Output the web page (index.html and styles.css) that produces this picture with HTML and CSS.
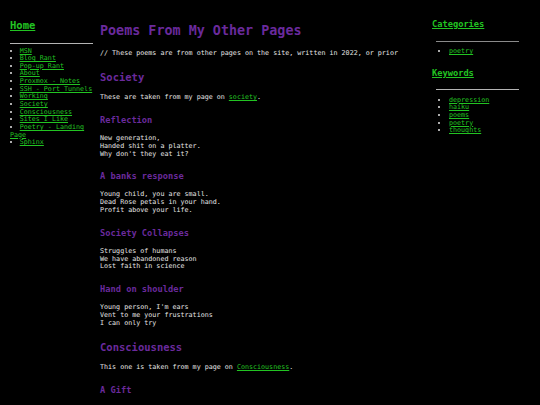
FILE: index.html
```html
<!DOCTYPE html>
<html lang="en">
<head>
<meta charset="utf-8">
<title>Poems From My Other Pages</title>
<link rel="stylesheet" href="styles.css">
</head>
<body>
<div class="layout">
  <nav class="side-left">
    <h2 class="side-title"><a href="#">Home</a></h2>
    <hr class="rule">
    <ul class="nav-list">
      <li><a href="#">MSN</a></li>
      <li><a href="#">Blog Rant</a></li>
      <li><a href="#">Pop-up Rant</a></li>
      <li><a href="#">About</a></li>
      <li><a href="#">Proxmox - Notes</a></li>
      <li><a href="#">SSH - Port Tunnels</a></li>
      <li><a href="#">Working</a></li>
      <li><a href="#">Society</a></li>
      <li><a href="#">Consciousness</a></li>
      <li><a href="#">Sites I Like</a></li>
      <li><a href="#">Poetry - Landing Page</a></li>
      <li><a href="#">Sphinx</a></li>
    </ul>
  </nav>
  <main class="content">
    <h1 class="page-title">Poems From My Other Pages</h1>
    <p>// These poems are from other pages on the site, written in 2022, or prior</p>
    <h2 class="section">Society</h2>
    <p>These are taken from my page on <a href="#">society</a>.</p>
    <h3 class="poem-title">Reflection</h3>
    <p>New generation,<br>Handed shit on a platter.<br>Why don't they eat it?</p>
    <h3 class="poem-title">A banks response</h3>
    <p>Young child, you are small.<br>Dead Rose petals in your hand.<br>Profit above your life.</p>
    <h3 class="poem-title">Society Collapses</h3>
    <p>Struggles of humans<br>We have abandoned reason<br>Lost faith in science</p>
    <h3 class="poem-title">Hand on shoulder</h3>
    <p>Young person, I'm ears<br>Vent to me your frustrations<br>I can only try</p>
    <h2 class="section">Consciousness</h2>
    <p>This one is taken from my page on <a href="#">Consciousness</a>.</p>
    <h3 class="poem-title">A Gift</h3>
  </main>
  <aside class="side-right">
    <h3 class="meta-title first"><a href="#">Categories</a></h3>
    <hr class="rule rule-right">
    <ul class="meta-list">
      <li><a href="#">poetry</a></li>
    </ul>
    <h3 class="meta-title"><a href="#">Keywords</a></h3>
    <hr class="rule rule-right rule-second">
    <ul class="meta-list second">
      <li><a href="#">depression</a></li>
      <li><a href="#">haiku</a></li>
      <li><a href="#">poems</a></li>
      <li><a href="#">poetry</a></li>
      <li><a href="#">thoughts</a></li>
    </ul>
  </aside>
</div>
</body>
</html>
```

FILE: styles.css
```css
html, body {
  margin: 0;
  padding: 0;
  background: #000;
}

body {
  font-family: "DejaVu Sans Mono", "Liberation Mono", monospace;
  font-size: 6.7px;
  line-height: 7.8px;
  color: #e6e6e6;
}

a {
  color: #22c422;
  text-decoration: underline;
}

.layout {
  display: flex;
  align-items: flex-start;
  padding-left: 10px;
}

.side-left {
  flex: none;
  width: 83px;
}

.side-title {
  margin: 19px 0 0;
  font-size: 10.5px;
  line-height: 12px;
  font-weight: bold;
}

.rule {
  border: 0;
  border-top: 1px solid #b4b4b4;
  height: 0;
  margin: 12px 0 0;
}

.nav-list {
  list-style: disc inside;
  padding: 0;
  margin: 3.5px 0 0;
  line-height: 7.65px;
}

.content {
  flex: none;
  width: 320px;
  margin-left: 7px;
}

.page-title {
  margin: 23px 0 11px;
  font-size: 13.4px;
  line-height: 16px;
  font-weight: bold;
  color: #6a2a9c;
}

.content p {
  margin: 10px 0;
}

.section {
  margin: 13.5px 0 11px;
  font-size: 10.5px;
  line-height: 12px;
  font-weight: bold;
  color: #6a2a9c;
}

.poem-title {
  margin: 13px 0 10px;
  font-size: 8.7px;
  line-height: 10px;
  font-weight: bold;
  color: #6a2a9c;
}

.side-right {
  flex: none;
  width: 91px;
  margin-left: 12px;
}

.meta-title {
  margin: 12px 0 0;
  font-size: 8.7px;
  line-height: 10px;
  font-weight: bold;
}

.meta-title.first {
  margin-top: 19px;
}

.rule-right {
  margin: 11.5px 0 0 4px;
  width: 83px;
  border-top-color: #8a8a8a;
}

.rule-second {
  border-top-color: #b4b4b4;
}

.meta-list {
  list-style: disc outside;
  padding-left: 17px;
  margin: 6.6px 0 0;
  line-height: 7.65px;
}

.meta-list.second {
  margin-top: 6.4px;
}
```
